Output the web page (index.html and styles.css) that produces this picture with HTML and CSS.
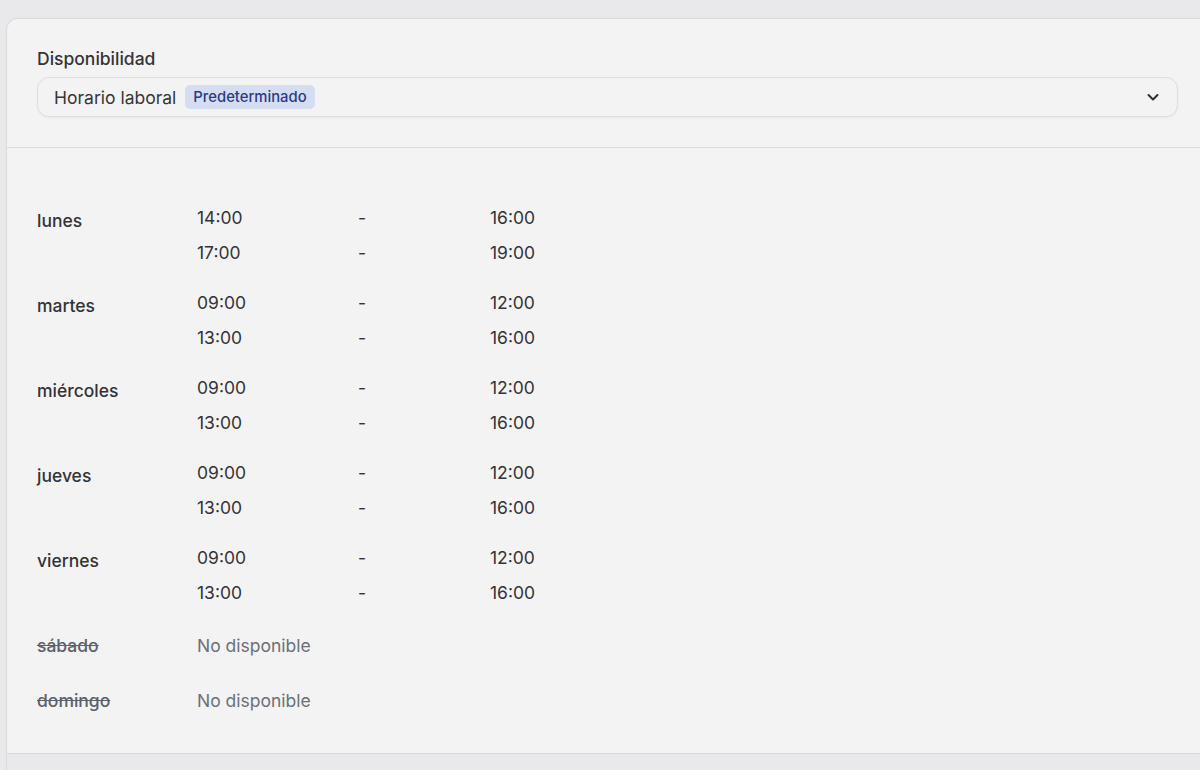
FILE: index.html
```html
<!DOCTYPE html>
<html lang="es">
<head>
<meta charset="utf-8">
<title>Disponibilidad</title>
<link rel="stylesheet" href="styles.css">
</head>
<body>
<div class="card">
  <div class="card-header">
    <div class="title">Disponibilidad</div>
    <div class="select">
      <span class="select-text">Horario laboral</span>
      <span class="badge">Predeterminado</span>
      <svg class="chevron" width="14" height="14" viewBox="0 0 14 14" aria-hidden="true"><path d="M2.5 5 L7 9.5 L11.5 5" fill="none" stroke="#2e2e33" stroke-width="2" stroke-linecap="round" stroke-linejoin="round"/></svg>
    </div>
  </div>
  <div class="card-body">
    <div class="day">
      <div class="day-name">lunes</div>
      <div class="slots">
        <span>14:00</span><span>-</span><span>16:00</span>
        <span>17:00</span><span>-</span><span>19:00</span>
      </div>
    </div>
    <div class="day">
      <div class="day-name">martes</div>
      <div class="slots">
        <span>09:00</span><span>-</span><span>12:00</span>
        <span>13:00</span><span>-</span><span>16:00</span>
      </div>
    </div>
    <div class="day">
      <div class="day-name">miércoles</div>
      <div class="slots">
        <span>09:00</span><span>-</span><span>12:00</span>
        <span>13:00</span><span>-</span><span>16:00</span>
      </div>
    </div>
    <div class="day">
      <div class="day-name">jueves</div>
      <div class="slots">
        <span>09:00</span><span>-</span><span>12:00</span>
        <span>13:00</span><span>-</span><span>16:00</span>
      </div>
    </div>
    <div class="day">
      <div class="day-name">viernes</div>
      <div class="slots">
        <span>09:00</span><span>-</span><span>12:00</span>
        <span>13:00</span><span>-</span><span>16:00</span>
      </div>
    </div>
    <div class="day off">
      <div class="day-name">sábado</div>
      <div class="unavailable">No disponible</div>
    </div>
    <div class="day off">
      <div class="day-name">domingo</div>
      <div class="unavailable">No disponible</div>
    </div>
  </div>
  <div class="card-footer"></div>
</div>
</body>
</html>
```
FILE: styles.css
```css
* { box-sizing: border-box; }
html, body { margin: 0; padding: 0; }
body {
  background: #e9e9eb;
  font-family: Inter, "Noto Sans", sans-serif;
  color: #2f2f33;
  overflow: hidden;
  height: 770px;
}
.card {
  margin: 18px -30px 0 6px;
  background: #f3f3f3;
  border: 1px solid #dcdcdf;
  border-radius: 12px 12px 0 0;
  box-shadow: 0 0 2px rgba(0,0,0,0.04);
}
.card-header {
  padding: 28px 51px 30px 30px;
  border-bottom: 1px solid #dcdcde;
}
.title {
  font-size: 17.5px;
  line-height: 24px;
  font-weight: 500;
  color: #333337;
}
.select {
  margin-top: 6px;
  height: 40px;
  display: flex;
  align-items: center;
  padding: 0 17px 0 16px;
  border: 1px solid #dedee0;
  border-radius: 12px;
  background: #f3f3f3;
  box-shadow: 0 1px 2px rgba(0,0,0,0.05);
}
.select-text {
  font-size: 17.5px;
  color: #36363a;
}
.badge {
  margin-left: 9px;
  height: 24px;
  line-height: 24px;
  padding: 0 8px;
  border-radius: 5px;
  background: #d5ddf2;
  color: #2a3a85;
  font-size: 14.8px;
  font-weight: 500;
}
.chevron { margin-left: auto; }
.card-body {
  padding: 52px 30px 32px 30px;
  display: flex;
  flex-direction: column;
  gap: 15px;
}
.day {
  display: flex;
}
.day.off {
  padding-top: 1px;
}
.day.off + .day.off {
  padding-top: 0;
}
.day-name {
  width: 160px;
  font-size: 17.5px;
  font-weight: 500;
  line-height: 35px;
  padding-top: 3px;
  color: #333337;
}
.slots {
  display: grid;
  grid-template-columns: 161px 132px auto;
  grid-auto-rows: 35px;
  align-items: center;
  font-size: 17.5px;
  color: #333337;
}
.day.off .day-name {
  line-height: 40px;
  padding-top: 0;
  color: #5b616a;
  text-decoration: line-through;
  text-decoration-color: #5b616a;
}
.unavailable {
  line-height: 40px;
  font-size: 17.5px;
  color: #6b7079;
}
.card-footer {
  height: 20px;
  background: #e9e9eb;
  border-top: 1px solid #d8d8db;
}
```
